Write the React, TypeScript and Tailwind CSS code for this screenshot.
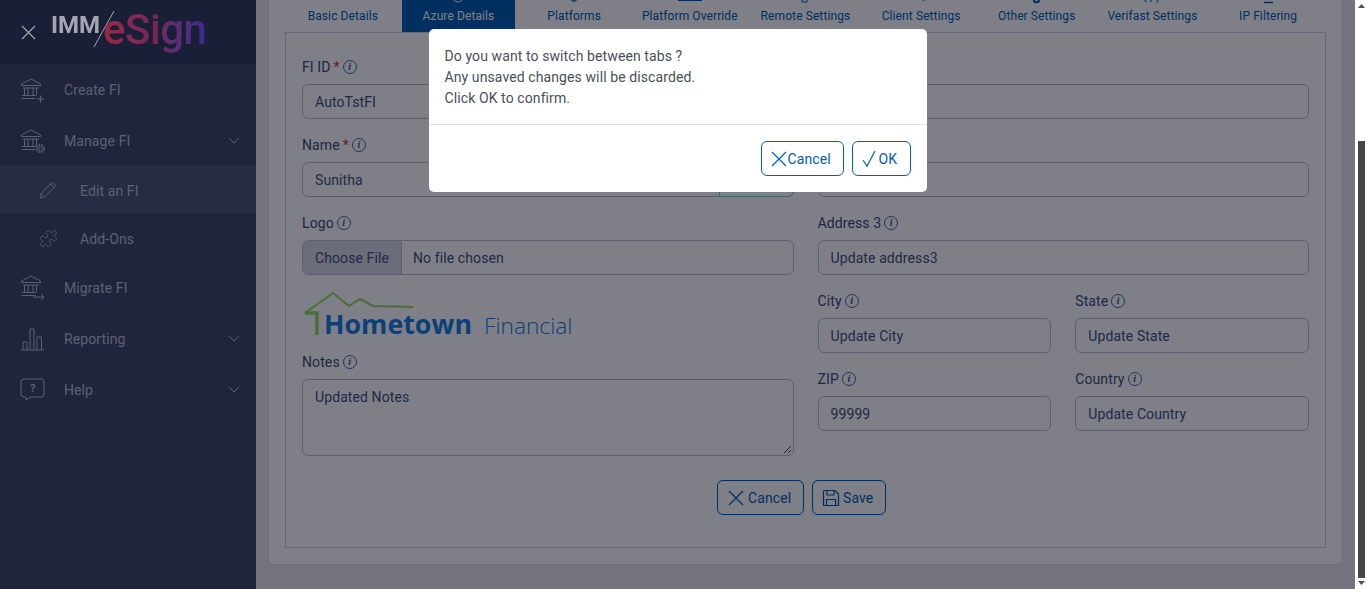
import type { ReactNode } from "react";
import { Puzzle } from "lucide-react";

const font = { fontFamily: "Roboto, 'Liberation Sans', sans-serif" };

function Bank({ children }: { children?: ReactNode }) {
  return (
    <svg width="26" height="26" viewBox="0 0 26 26" fill="none" stroke="currentColor" strokeWidth="1" className="shrink-0">
      <path d="M1.500 7 11 2l9.500 5v1.500h-19z" />
      <path d="M3 11h16M4.500 11v7M8 11v7M13 11v7M16.500 11v7M2 18.500h14M1.500 21.500h14" />
      {children}
    </svg>
  );
}

const icons: Record<string, ReactNode> = {
  create: (
    <Bank>
      <path d="M17 22h7M20.500 18.500v7" strokeWidth="1.200" />
    </Bank>
  ),
  manage: (
    <Bank>
      <circle cx="20.500" cy="20.500" r="2" />
      <circle cx="20.500" cy="20.500" r="3.800" strokeDasharray="2 1" strokeWidth="1.400" />
    </Bank>
  ),
  migrate: (
    <Bank>
      <path d="M13 23h11M21 20l3 3-3 3" />
    </Bank>
  ),
  reporting: (
    <svg width="26" height="26" viewBox="0 0 26 26" fill="none" stroke="currentColor" strokeWidth="1" className="shrink-0">
      <path d="M1 24h23M3 24v-8h4v8M10 24V3h4v21M17 24V11h4.500v13" />
    </svg>
  ),
  help: (
    <svg width="26" height="26" viewBox="0 0 26 26" fill="none" stroke="currentColor" strokeWidth="1" className="shrink-0">
      <path d="M4 2h18a2.500 2.500 0 0 1 2 2.500v13a3 3 0 0 1-2.500 2.500H11l-5 3v-3H4a3 3 0 0 1-3-3V5a3 3 0 0 1 3-3z" />
      <text x="10" y="15" fontSize="11" fontWeight="700" fill="currentColor" stroke="none">?</text>
    </svg>
  ),
  pencil: (
    <svg width="18" height="18" viewBox="0 0 18 18" fill="none" stroke="currentColor" strokeWidth="1" className="shrink-0">
      <path d="M1 17l1-4.500L12.500 2a1.500 1.500 0 0 1 2 0l1.500 1.500a1.500 1.500 0 0 1 0 2L5.500 16z" />
      <path d="M2 12.500 5.500 16M11.500 3l3.500 3.500" />
    </svg>
  ),
  puzzle: <Puzzle size={19} strokeWidth={1} className="shrink-0" />,
};

function Chevron() {
  return (
    <svg width="12" height="7" viewBox="0 0 12 7" fill="none" stroke="currentColor" strokeWidth="1" className="ml-auto mr-[16px]">
      <path d="M1 1l5 5 5-5" />
    </svg>
  );
}

function NavItem({ icon, label, chevron, h = "h-[51px]" }: { icon: string; label: string; chevron?: boolean; h?: string }) {
  return (
    <div className={`flex items-center pl-[20px] ${h}`}>
      <div className="w-[44px]">{icons[icon]}</div>
      <span className="mt-[2px]">{label}</span>
      {chevron && <Chevron />}
    </div>
  );
}

function SubItem({ icon, label, active, h }: { icon: string; label: string; active?: boolean; h: string }) {
  return (
    <div className={`flex items-center pl-[39px] ${h} ${active ? "bg-[#4e587b]" : ""}`}>
      <div className="w-[41px]">{icons[icon]}</div>
      <span className="mt-[2px]">{label}</span>
    </div>
  );
}

function Sidebar() {
  return (
    <aside className="w-[256px] shrink-0 bg-[#404a6d] text-[14px] text-[#b8c0d2]">
      <div className="flex h-[64px] items-center bg-[#343e61] pl-[21px]">
        <svg width="15" height="15" viewBox="0 0 15 15" stroke="#ffffff" strokeWidth="1.200" className="relative z-20 opacity-60">
          <path d="M1 1l13 13M14 1 1 14" />
        </svg>
        <div className="relative z-20 ml-[15px] flex h-full items-start tracking-normal opacity-60">
          <span className="mt-[13px] text-[24px] font-bold leading-[24px] text-[#ffffff]">IMM</span>
          <svg width="22" height="38" viewBox="0 0 22 38" stroke="#ffffff" strokeWidth="1" className="ml-[-7px] mt-[10px] shrink-0">
            <path d="M1 37 21 1" />
          </svg>
          <span className="ml-[-12px] mt-[9px] bg-gradient-to-r from-[#f0324a] via-[#b02a70] to-[#5030c8] bg-clip-text pb-[8px] text-[42px] font-medium leading-[42px] tracking-[-0.5px] text-transparent">
            eSign
          </span>
        </div>
      </div>
      <NavItem icon="create" label="Create FI" />
      <NavItem icon="manage" label="Manage FI" chevron />
      <SubItem icon="pencil" label="Edit an FI" active h="h-[48px]" />
      <SubItem icon="puzzle" label="Add-Ons" h="h-[49px]" />
      <NavItem icon="migrate" label="Migrate FI" h="h-[50px] pb-[2px]" />
      <NavItem icon="reporting" label="Reporting" chevron />
      <NavItem icon="help" label="Help" chevron />
    </aside>
  );
}

const tabs: { label: string; mark?: ReactNode; active?: boolean }[] = [
  { label: "Basic Details" },
  { label: "Azure Details", active: true, mark: <path d="M6 0a6 6 0 0 0 12 0" transform="translate(0 -4)" /> },
  { label: "Platforms", mark: <path d="M10 0h4v1h-4z" /> },
  { label: "Platform Override", mark: <path d="M0 .500h24" /> },
  { label: "Remote Settings", mark: <path d="M9 0v2h5V0" /> },
  { label: "Client Settings", mark: <path d="M13 0h3" /> },
  { label: "Other Settings", mark: <path d="M9 0c0 3 5 3 5 0" strokeWidth="2" /> },
  { label: "Verifast Settings", mark: <path d="M5 0c0 2 1 2 2 2M18 0c0 2-1 2-2 2M11 0v2" /> },
  { label: "IP Filtering", mark: <path d="M8 2.500h9" strokeWidth="1.500" /> },
];

function Tabs() {
  return (
    <div className="flex h-[32px]">
      {tabs.map((t) => (
        <div
          key={t.label}
          className={`flex h-[32px] flex-col items-center text-[12px] ${
            t.active ? "mx-[1px] w-[113.670px] bg-[#0060ae] text-white" : "w-[115.670px] text-[#005fae]"
          }`}
        >
          <svg width="24" height="4" viewBox="0 0 24 4" fill="none" stroke="currentColor" strokeWidth="1" className="shrink-0">
            {t.mark}
          </svg>
          <span className="mt-[5px] leading-[14px]">{t.label}</span>
        </div>
      ))}
    </div>
  );
}

function Info() {
  return (
    <span className="mb-[2px] ml-[3px] inline-flex h-[14px] w-[14px] items-center justify-center rounded-full border border-[#4a6aa0] text-[10px] font-bold italic leading-none text-[#3a5a90]" style={{ fontFamily: "'Liberation Serif', serif" }}>
      i
    </span>
  );
}

function Label({ text, required }: { text: string; required?: boolean }) {
  return (
    <div className="mb-[7px] flex h-[21px] items-center pt-[2px] text-[14px] text-[#3a5078]">
      {text}
      {required && <span className="ml-[3px] text-[#e0343c]">*</span>}
      <Info />
    </div>
  );
}

function Input({ value, children }: { value?: string; children?: ReactNode }) {
  return (
    <div className="flex h-[35px] items-center rounded-[6px] border border-[#bcbfd0] bg-white pl-[12px] text-[14px] text-[#3c5480]">
      <span className="mt-[2px] flex-1">{value}</span>
      {children}
    </div>
  );
}

function Field({ label, value, required, children }: { label: string; value?: string; required?: boolean; children?: ReactNode }) {
  return (
    <div className="mb-[15px]">
      <Label text={label} required={required} />
      <Input value={value}>{children}</Input>
    </div>
  );
}

function Logo() {
  return (
    <div className="relative mb-[11px] ml-[1px] mt-[-1px] flex h-[51px] items-baseline pt-[15px] tracking-normal">
      <svg width="112" height="46" viewBox="0 0 112 46" fill="none" className="absolute left-0 top-[2px]">
        <path d="M2 22 30 2l16 13 11-7 13 7 40 1" stroke="#8ee060" strokeWidth="2" />
        <path d="M2 22h12v22" stroke="#8ee060" strokeWidth="3.500" />
      </svg>
      <span className="ml-[21px] text-[26.800px] font-bold leading-[40px] text-[#1a80e0]" style={{ fontFamily: "'Open Sans', sans-serif" }}>
        Hometown
      </span>
      <span className="ml-[12px] text-[22.700px] font-light leading-[40px] text-[#1a80e0]" style={{ fontFamily: "'Open Sans', sans-serif" }}>
        Financial
      </span>
    </div>
  );
}

function ActionButton({ icon, label, className }: { icon: ReactNode; label: string; className: string }) {
  return (
    <div className={`flex h-[35px] items-center rounded-[6px] border border-[#005fae] text-[14px] text-[#005fae] ${className}`}>
      {icon}
      <span className="mt-[2px]">{label}</span>
    </div>
  );
}

const XIcon = (
  <svg width="18" height="18" viewBox="0 0 18 18" fill="none" stroke="currentColor" strokeWidth="1.200" className="shrink-0">
    <path d="M2 2l14 14M16 2 2 16" />
  </svg>
);

function Form() {
  return (
    <div className="h-[516px] border border-[#cfcfde] px-[16px] pt-[23px]">
      <div className="grid grid-cols-2 gap-x-[24px]">
        <div>
          <Field label="FI ID" value="AutoTstFI" required />
          <Field label="Name" value="Sunitha" required>
            <div className="-mr-px h-[35px] w-[75px] rounded-r-[6px] border border-[#70d8a8]" />
          </Field>
          <div className="mb-[15px]">
            <Label text="Logo" />
            <div className="flex h-[35px] items-center overflow-hidden rounded-[6px] border border-[#bcbfd0] text-[14px] text-[#3c5480]">
              <span className="flex h-full w-[99px] items-center border-r border-[#bcbfd0] bg-[#d8dae6] pl-[12px] pt-[2px]">Choose File</span>
              <span className="mt-[2px] pl-[11px]">No file chosen</span>
            </div>
          </div>
          <Logo />
          <Label text="Notes" />
          <div className="relative h-[77px] rounded-[6px] border border-[#bcbfd0] pl-[12px] pt-[7px] text-[14px] text-[#3c5480]">
            Updated Notes
            <svg width="9" height="9" viewBox="0 0 9 9" stroke="#444" strokeWidth="1" className="absolute bottom-[1px] right-[1px]">
              <path d="M1 8l7-7M5 8l3-3" />
            </svg>
          </div>
        </div>
        <div>
          <Field label="Address 1" />
          <Field label="Address 2" />
          <Field label="Address 3" value="Update address3" />
          <div className="grid grid-cols-2 gap-x-[24px]">
            <Field label="City" value="Update City" />
            <Field label="State" value="Update State" />
            <Field label="ZIP" value="99999" />
            <Field label="Country" value="Update Country" />
          </div>
        </div>
      </div>
      <div className="mt-[24px] flex justify-center gap-[8px] pr-[8px]">
        <ActionButton icon={XIcon} label="Cancel" className="w-[87px] gap-[3px] pl-[9px]" />
        <ActionButton
          label="Save"
          className="w-[74px] gap-[3px] pl-[9px]"
          icon={
            <svg width="18" height="18" viewBox="0 0 18 18" fill="none" stroke="currentColor" strokeWidth="1.200" className="shrink-0">
              <path d="M2 1.500h11l3.500 3.500v11.500h-15V2z" />
              <path d="M5 1.500v4.500h7V1.500M4.500 16.500V10.500h9v6" />
            </svg>
          }
        />
      </div>
    </div>
  );
}

function Modal() {
  return (
    <div className="absolute left-0 right-[11px] top-0 z-30 flex justify-center pt-[29px]">
      <div className="h-[163px] w-[498px] rounded-[5px] bg-white text-[14px] text-[#495057]">
        <div className="h-[96px] border-b border-[#dee2e6] px-[16px] pt-[17px] leading-[21px]">
          <p>Do you want to switch between tabs ?</p>
          <p>Any unsaved changes will be discarded.</p>
          <p>Click OK to confirm.</p>
        </div>
        <div className="flex justify-end gap-[8px] pr-[16px] pt-[16px]">
          <ActionButton icon={XIcon} label="Cancel" className="w-[83px] pl-[8px]" />
          <ActionButton
            label="OK"
            className="w-[59px] pl-[8px]"
            icon={
              <svg width="18" height="18" viewBox="0 0 18 18" fill="none" stroke="currentColor" strokeWidth="1.200" className="shrink-0">
                <path d="M2 10l4 6 8-15" />
              </svg>
            }
          />
        </div>
      </div>
    </div>
  );
}

function Scrollbar() {
  return (
    <div className="flex w-[11px] shrink-0 flex-col items-center bg-white pl-[1px]">
      <svg width="7" height="4" viewBox="0 0 7 4" className="mt-[4px]" fill="#505050">
        <path d="M3.500 0 7 4H0z" />
      </svg>
      <div className="mt-[133px] h-[437px] w-[7px] bg-[#464646]" />
      <svg width="7" height="4" viewBox="0 0 7 4" className="mt-[3px]" fill="#505050">
        <path d="M0 0h7L3.500 4z" />
      </svg>
    </div>
  );
}

export default function App() {
  return (
    <div className="relative flex h-screen w-screen overflow-hidden tracking-[0.1px]" style={font}>
      <Sidebar />
      <main className="min-w-0 flex-1 bg-[#e8e8ed] pl-[12px] pr-[12px]">
        <div className="h-[565px] rounded-b-[6px] border-x border-b border-[#dedee6] bg-white px-[16px]">
          <Tabs />
          <Form />
        </div>
      </main>
      <Scrollbar />
      <div className="absolute inset-y-0 left-0 right-[11px] z-10 bg-[#00000f]/50" />
      <Modal />
    </div>
  );
}
